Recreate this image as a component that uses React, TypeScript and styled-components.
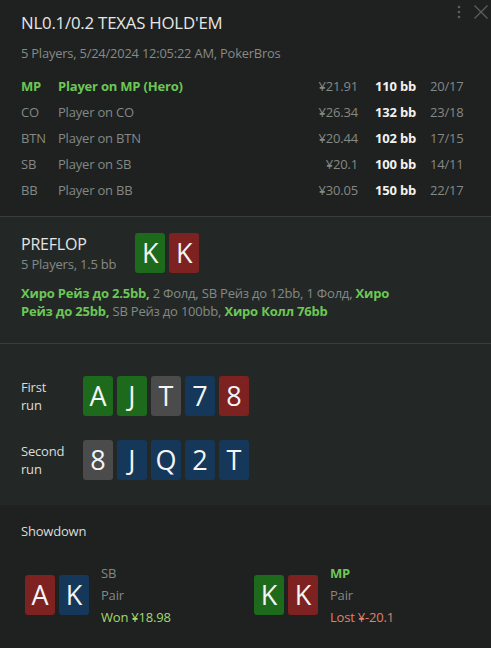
import React from "react";
import styled, { createGlobalStyle } from "styled-components";

const Global = createGlobalStyle`
  html, body { margin: 0; padding: 0; background: #1e211f; }
  body { font-family: "Open Sans", "Noto Sans", sans-serif; }
  * { box-sizing: border-box; }
`;

const Page = styled.div`
  width: 491px;
  height: 648px;
  background: #1e211f;
  color: #e4e4e4;
  position: relative;
  overflow: hidden;
  display: flex;
  flex-direction: column;
`;

const TopIcons = styled.div`
  position: absolute;
  top: 4px;
  right: 2px;
  display: flex;
  align-items: center;
  gap: 11px;
  color: #5b5e5c;
`;

const Section = styled.section<{ $bg?: string; $pad: string; $border?: boolean }>`
  background: ${(p) => p.$bg ?? "#1e211f"};
  padding: ${(p) => p.$pad};
  border-bottom: ${(p) => (p.$border ? "1px solid #393e3b" : "none")};
`;

const Title = styled.h1`
  margin: 0;
  font-size: 16.8px;
  font-weight: 400;
  line-height: 22px;
  color: #e6e6e6;
  letter-spacing: -0.2px;
`;

const Sub = styled.div`
  font-size: 12.9px;
  line-height: 18px;
  color: #878a88;
  margin-top: 10px;
  letter-spacing: -0.2px;
`;

const PlayerTable = styled.div`
  display: grid;
  grid-template-columns: 37px 1fr 77px 55px 40px;
  grid-auto-rows: 26px;
  align-items: center;
  margin-top: 11px;
  font-size: 13px;
  letter-spacing: -0.2px;
`;

type Kind = "pos" | "name" | "money" | "bb" | "stat";

const Cell = styled.div<{ $hero?: boolean; $kind: Kind }>`
  color: ${(p) =>
    p.$kind === "bb"
      ? "#f2f2f2"
      : p.$hero && (p.$kind === "pos" || p.$kind === "name")
      ? "#6cc756"
      : "#858886"};
  font-weight: ${(p) =>
    p.$kind === "bb" || (p.$hero && (p.$kind === "pos" || p.$kind === "name")) ? 700 : 400};
  text-align: ${(p) => (p.$kind === "money" ? "right" : "left")};
  padding-right: ${(p) => (p.$kind === "money" ? "17px" : "0")};
  white-space: nowrap;
`;

const StreetHead = styled.div`
  display: flex;
  align-items: center;
  gap: 19px;
`;

const StreetName = styled.div`
  display: flex;
  flex-direction: column;
`;

const StreetTitle = styled.div`
  font-size: 16px;
  line-height: 22px;
  color: #e4e4e4;
  letter-spacing: -0.2px;
`;

const StreetSub = styled.div`
  font-size: 13px;
  line-height: 18px;
  color: #858886;
  letter-spacing: -0.2px;
`;

const Actions = styled.p`
  margin: 11px 0 0;
  max-width: 395px;
  font-size: 13px;
  line-height: 18px;
  color: #858886;
  letter-spacing: -0.2px;
`;

const HeroAct = styled.span`
  color: #6cc756;
  font-weight: 700;
`;

const Cards = styled.div`
  display: flex;
  gap: 4px;
`;

const suitColors: Record<string, string> = {
  c: "#1d6a1d",
  h: "#7d2121",
  d: "#14375a",
  s: "#4a4b4a",
};

const Card = styled.div<{ $suit: string }>`
  width: 30px;
  height: 40px;
  border-radius: 3px;
  background: ${(p) => suitColors[p.$suit]};
  color: #f4f4f4;
  font-size: 27px;
  line-height: 40px;
  text-align: center;
  font-family: "Open Sans", sans-serif;
`;

const Runs = styled.div`
  display: flex;
  flex-direction: column;
  gap: 24px;
`;

const RunRow = styled.div`
  display: flex;
  align-items: center;
`;

const RunLabel = styled.div`
  width: 62px;
  font-size: 13px;
  line-height: 18px;
  color: #dcdcdc;
  letter-spacing: -0.2px;
`;

const ShowTitle = styled.div`
  font-size: 13px;
  line-height: 18px;
  color: #dcdcdc;
  letter-spacing: -0.2px;
`;

const ShowGrid = styled.div`
  display: grid;
  grid-template-columns: 229px 1fr;
  margin-top: 22px;
  padding-left: 4px;
`;

const ShowHand = styled.div`
  display: flex;
  align-items: center;
  gap: 12px;
`;

const ShowInfo = styled.div`
  display: flex;
  flex-direction: column;
  font-size: 13px;
  line-height: 22px;
  letter-spacing: -0.2px;
`;

const InfoLine = styled.div<{ $tone: "pos" | "hero" | "muted" | "won" | "lost" }>`
  color: ${(p) =>
    ({ pos: "#858886", hero: "#6cc756", muted: "#858886", won: "#a7d86b", lost: "#e07f6c" }[p.$tone])};
  font-weight: ${(p) => (p.$tone === "hero" ? 700 : 400)};
`;

const players = [
  { pos: "MP", name: "Player on MP (Hero)", money: "¥21.91", bb: "110 bb", stat: "20/17", hero: true },
  { pos: "CO", name: "Player on CO", money: "¥26.34", bb: "132 bb", stat: "23/18" },
  { pos: "BTN", name: "Player on BTN", money: "¥20.44", bb: "102 bb", stat: "17/15" },
  { pos: "SB", name: "Player on SB", money: "¥20.1", bb: "100 bb", stat: "14/11" },
  { pos: "BB", name: "Player on BB", money: "¥30.05", bb: "150 bb", stat: "22/17" },
];

const CardRow = ({ cards }: { cards: string[] }) => (
  <Cards>
    {cards.map((c, i) => (
      <Card key={i} $suit={c[1]}>
        {c[0]}
      </Card>
    ))}
  </Cards>
);

export default function App() {
  return (
    <Page>
      <Global />
      <TopIcons>
        <svg width="6" height="16" viewBox="0 0 6 16">
          <circle cx="3" cy="3" r="1.3" fill="currentColor" />
          <circle cx="3" cy="8" r="1.3" fill="currentColor" />
          <circle cx="3" cy="13" r="1.3" fill="currentColor" />
        </svg>
        <svg width="16" height="16" viewBox="0 0 16 16">
          <path d="M1.5 1.5 L14.5 14.5 M14.5 1.5 L1.5 14.5" stroke="currentColor" strokeWidth="1.3" fill="none" />
        </svg>
      </TopIcons>

      <Section $pad="12px 21px 13px" $border>
        <Title>NL0.1/0.2 TEXAS HOLD'EM</Title>
        <Sub>5 Players, 5/24/2024 12:05:22 AM, PokerBros</Sub>
        <PlayerTable>
          {players.map((p) => (
            <React.Fragment key={p.pos}>
              <Cell $hero={p.hero} $kind="pos">{p.pos}</Cell>
              <Cell $hero={p.hero} $kind="name">{p.name}</Cell>
              <Cell $hero={p.hero} $kind="money">{p.money}</Cell>
              <Cell $hero={p.hero} $kind="bb">{p.bb}</Cell>
              <Cell $hero={p.hero} $kind="stat">{p.stat}</Cell>
            </React.Fragment>
          ))}
        </PlayerTable>
      </Section>

      <Section $bg="#232826" $pad="16px 21px 23px" $border>
        <StreetHead>
          <StreetName>
            <StreetTitle>PREFLOP</StreetTitle>
            <StreetSub>5 Players, 1.5 bb</StreetSub>
          </StreetName>
          <CardRow cards={["Kc", "Kh"]} />
        </StreetHead>
        <Actions>
          <HeroAct>Хиро Рейз до 2.5bb,</HeroAct> 2 Фолд, SB Рейз до 12bb, 1 Фолд,{" "}
          <HeroAct>Хиро Рейз до 25bb,</HeroAct> SB Рейз до 100bb, <HeroAct>Хиро Колл 76bb</HeroAct>
        </Actions>
      </Section>

      <Section $bg="#232826" $pad="32px 21px 25px">
        <Runs>
          <RunRow>
            <RunLabel>
              First
              <br />
              run
            </RunLabel>
            <CardRow cards={["Ac", "Jc", "Ts", "7d", "8h"]} />
          </RunRow>
          <RunRow>
            <RunLabel>
              Second
              <br />
              run
            </RunLabel>
            <CardRow cards={["8s", "Jd", "Qd", "2d", "Td"]} />
          </RunRow>
        </Runs>
      </Section>

      <Section $pad="17px 21px 20px">
        <ShowTitle>Showdown</ShowTitle>
        <ShowGrid>
          <ShowHand>
            <CardRow cards={["Ah", "Kd"]} />
            <ShowInfo>
              <InfoLine $tone="pos">SB</InfoLine>
              <InfoLine $tone="muted">Pair</InfoLine>
              <InfoLine $tone="won">Won ¥18.98</InfoLine>
            </ShowInfo>
          </ShowHand>
          <ShowHand>
            <CardRow cards={["Kc", "Kh"]} />
            <ShowInfo>
              <InfoLine $tone="hero">MP</InfoLine>
              <InfoLine $tone="muted">Pair</InfoLine>
              <InfoLine $tone="lost">Lost ¥-20.1</InfoLine>
            </ShowInfo>
          </ShowHand>
        </ShowGrid>
      </Section>
    </Page>
  );
}
